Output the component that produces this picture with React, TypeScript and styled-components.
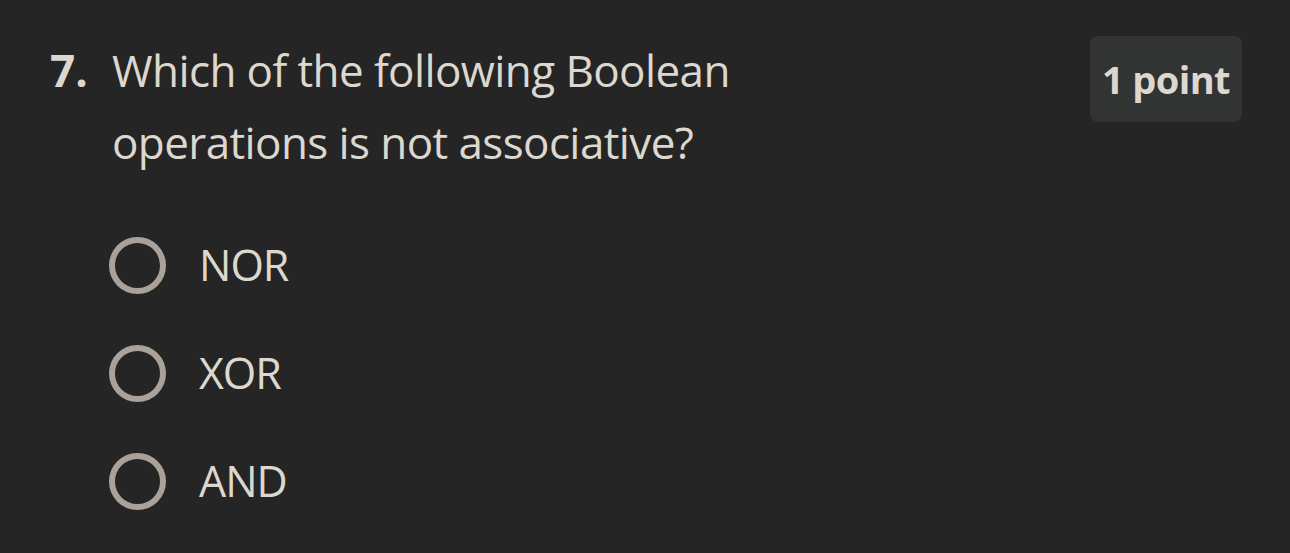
import React from 'react';
import styled, { createGlobalStyle } from 'styled-components';

const GlobalStyle = createGlobalStyle`
    html, body {
        margin: 0;
        padding: 0;
        background: #252525;
    }
    body {
        font-family: 'Open Sans', 'Noto Sans', sans-serif;
        color: #dcd8cf;
    }
`;

const Page = styled('div')`
    width: 1290px;
    height: 553px;
    box-sizing: border-box;
    padding: 34px 48px 0 50px;
    overflow: hidden;
`;

const QuestionHeader = styled('div')`
    display: flex;
    flex-direction: row;
    align-items: flex-start;
`;

const Number = styled('span')`
    width: 62px;
    flex-shrink: 0;
    font-size: 44px;
    font-weight: 700;
    line-height: 72px;
`;

const Prompt = styled('div')`
    width: 700px;
    font-size: 44px;
    line-height: 72px;
    letter-spacing: -0.6px;
`;

const Spacer = styled('div')`
    flex: 1;
`;

const PointBadge = styled('div')`
    display: flex;
    align-items: center;
    justify-content: center;
    width: 152px;
    height: 86px;
    margin-top: 2px;
    box-sizing: border-box;
    border-radius: 8px;
    background: #323433;
    font-size: 38px;
    font-weight: 700;
    letter-spacing: -0.6px;
`;

const OptionList = styled('div')`
    display: flex;
    flex-direction: column;
    gap: 50px;
    margin-top: 58px;
    padding-left: 59px;
`;

const Option = styled('label')`
    display: flex;
    flex-direction: row;
    align-items: center;
    gap: 33px;
    height: 58px;
`;

const Radio = styled('span')`
    width: 57px;
    height: 57px;
    box-sizing: border-box;
    border-radius: 50%;
    border: 6px solid #aaa298;
    flex-shrink: 0;
`;

const OptionText = styled('span')`
    font-size: 43px;
    line-height: 58px;
    letter-spacing: -1px;
`;

const options = ['NOR', 'XOR', 'AND'];

export default function App() {
    return (
        <Page>
            <GlobalStyle />
            <QuestionHeader>
                <Number>7.</Number>
                <Prompt>Which of the following Boolean operations is not associative?</Prompt>
                <Spacer />
                <PointBadge>1 point</PointBadge>
            </QuestionHeader>
            <OptionList>
                {options.map((option) => (
                    <Option key={option}>
                        <Radio />
                        <OptionText>{option}</OptionText>
                    </Option>
                ))}
            </OptionList>
        </Page>
    );
}
